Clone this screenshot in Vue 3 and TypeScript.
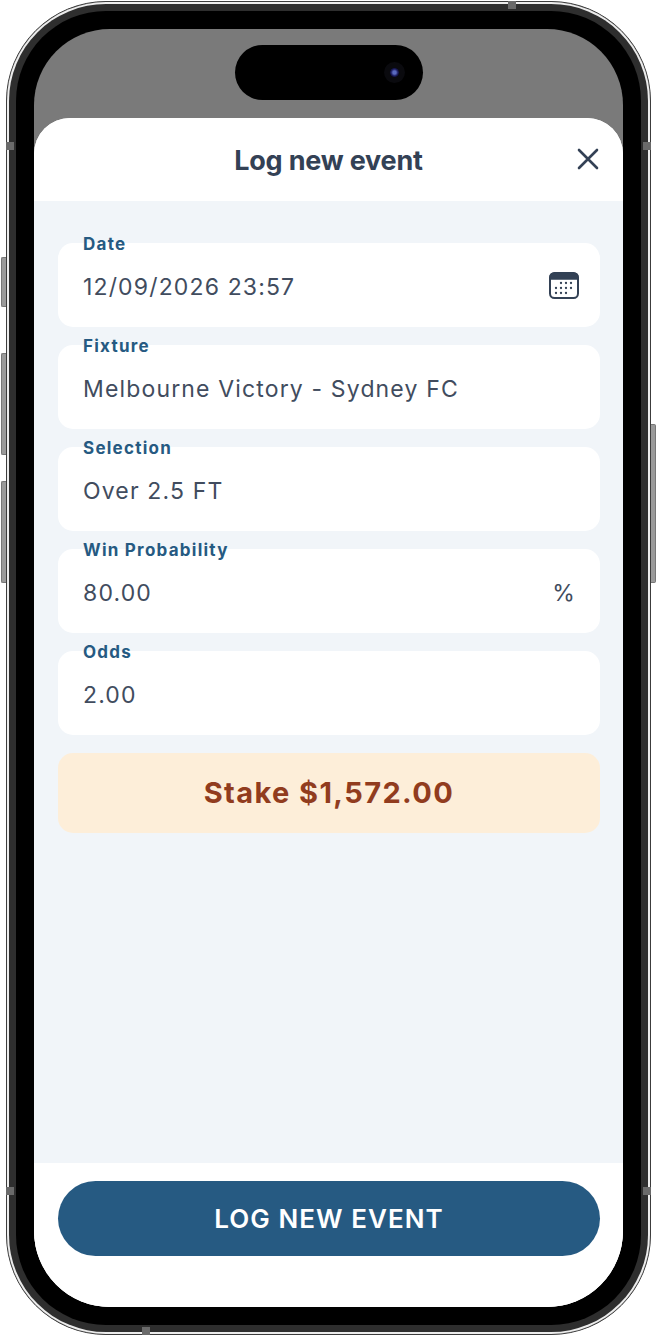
<script setup lang="ts">
interface Field { label: string; value: string; suffix?: string; calendar?: boolean }
const fields: Field[] = [
  { label: 'Date', value: '12/09/2026 23:57', calendar: true },
  { label: 'Fixture', value: 'Melbourne Victory - Sydney FC' },
  { label: 'Selection', value: 'Over 2.5 FT' },
  { label: 'Win Probability', value: '80.00', suffix: '%' },
  { label: 'Odds', value: '2.00' },
]
const dots: [number, number][] = [
  [12, 12], [17, 12], [22, 12],
  [7, 17], [12, 17], [17, 17], [22, 17],
  [7, 22], [12, 22], [17, 22],
]
</script>

<template>
  <div class="page">
    <div class="phone">
      <span class="side vol-a"></span>
      <span class="side vol-b"></span>
      <span class="side vol-c"></span>
      <span class="side power"></span>
      <span class="band band-lt"></span>
      <span class="band band-lb"></span>
      <span class="band band-rt"></span>
      <span class="band band-rb"></span>
      <span class="band-h band-tr"></span>
      <span class="band-h band-bl"></span>
      <div class="ring-silver">
        <div class="ring-dark">
          <div class="screen">
            <span class="speaker"></span>
            <div class="scrim">
              <div class="island"><span class="camera"></span></div>
            </div>
            <div class="sheet">
              <header class="head">
                <h1 class="title">Log new event</h1>
                <button class="close" aria-label="Close">
                  <svg width="22" height="22" viewBox="0 0 22 22" fill="none" stroke="#334155" stroke-width="2.6" stroke-linecap="round">
                    <path d="M2 2 20 20M20 2 2 20" />
                  </svg>
                </button>
              </header>
              <main class="body">
                <div v-for="f in fields" :key="f.label" class="field">
                  <span class="label">{{ f.label }}</span>
                  <span class="value">{{ f.value }}</span>
                  <span v-if="f.suffix" class="suffix">{{ f.suffix }}</span>
                  <svg v-if="f.calendar" class="cal" width="30" height="28" viewBox="0 0 30 28">
                    <rect x="1" y="2" width="28" height="25" rx="4.5" fill="#fff" stroke="#334155" stroke-width="2" />
                    <path d="M1 8V6.5A4.5 4.5 0 0 1 5.5 2h19A4.5 4.5 0 0 1 29 6.5V8z" fill="#334155" stroke="#334155" stroke-width="1.4" />
                    <circle v-for="d in dots" :key="d.join()" :cx="d[0]" :cy="d[1]" r="1.15" fill="#334155" />
                  </svg>
                </div>
                <div class="stake">Stake $1,572.00</div>
              </main>
              <footer class="foot">
                <button class="cta">LOG NEW EVENT</button>
              </footer>
            </div>
          </div>
        </div>
      </div>
    </div>
  </div>
</template>

<style>
html, body { margin: 0; background: #fff; }
</style>

<style scoped>
.page {
  width: 656px;
  height: 1336px;
  padding: 1px 5px 1px 6px;
  box-sizing: border-box;
  background: #fff;
  font-family: Inter, "Liberation Sans", sans-serif;
}
.phone {
  position: relative;
  width: 645px;
  height: 1334px;
  box-sizing: border-box;
  border-radius: 100px;
  border: 1px solid #3c3c3c;
  background: #3c3c3c;
}
.side {
  position: absolute;
  width: 5px;
  background: #9a9a9a;
  border: 1px solid #777;
  border-right: 0;
  box-sizing: border-box;
}
.vol-a { left: -6px; top: 255px; height: 50px; border-radius: 2px 0 0 2px; }
.vol-b { left: -6px; top: 351px; height: 102px; border-radius: 2px 0 0 2px; }
.vol-c { left: -6px; top: 479px; height: 102px; border-radius: 2px 0 0 2px; }
.power { right: -6px; top: 422px; height: 159px; border-radius: 0 2px 2px 0; border-right: 1px solid #777; border-left: 0; }
.band, .band-h {
  position: absolute;
  z-index: 2;
  background: #6a6a6a;
}
.band { width: 8px; height: 8px; }
.band-lt { left: -1px; top: 140px; }
.band-lb { left: -1px; top: 1185px; }
.band-rt { right: -1px; top: 140px; }
.band-rb { right: -1px; top: 1185px; }
.band-h { width: 8px; height: 8px; }
.band-tr { left: 501px; top: -1px; }
.band-bl { left: 135px; bottom: -1px; }
.ring-silver {
  height: 100%;
  box-sizing: border-box;
  padding: 2px;
  border-radius: 99px;
  background: #ececec;
}
.ring-dark {
  height: 100%;
  box-sizing: border-box;
  padding: 7px;
  border-radius: 97px;
  background: #2e2e2e;
}
.screen {
  position: relative;
  height: 100%;
  box-sizing: border-box;
  padding: 18px;
  display: flex;
  flex-direction: column;
  border-radius: 90px;
  background: #000;
  overflow: hidden;
}
.speaker {
  position: absolute;
  left: 249px;
  top: 0;
  width: 128px;
  height: 3px;
  border-radius: 0 0 3px 3px;
  background: #000;
}
.scrim {
  position: absolute;
  left: 18px;
  right: 18px;
  top: 18px;
  bottom: 18px;
  border-radius: 76px;
  background: #7a7a7a;
  overflow: hidden;
}
.island {
  position: relative;
  width: 188px;
  height: 55px;
  margin: 16px 0 0 201px;
  border-radius: 28px;
  background: #000;
}
.camera {
  position: absolute;
  left: 155px;
  top: 23px;
  width: 9px;
  height: 9px;
  border-radius: 50%;
  background: radial-gradient(circle, #5a6ac0 0 25%, #1a1a5a 55%, #0b0b1f 100%);
  box-shadow: 0 0 0 6px #0a0a0e;
}
.sheet {
  position: relative;
  margin-top: 89px;
  flex: 1;
  display: flex;
  flex-direction: column;
  min-height: 0;
  background: #fff;
  border-radius: 36px 36px 76px 76px;
  overflow: hidden;
}
.head {
  position: relative;
  height: 83px;
  flex: none;
  display: flex;
  align-items: center;
  justify-content: center;
  background: #fff;
}
.title {
  margin: 2px 0 0;
  font-size: 27px;
  font-weight: 700;
  letter-spacing: -0.2px;
  color: #334155;
}
.close {
  position: absolute;
  right: 24px;
  top: 30px;
  width: 22px;
  height: 22px;
  padding: 0;
  border: 0;
  background: none;
  display: flex;
}
.body {
  flex: 1;
  min-height: 0;
  box-sizing: border-box;
  padding: 42px 23px 0 24px;
  display: flex;
  flex-direction: column;
  gap: 18px;
  background: #f1f5f9;
}
.field {
  position: relative;
  height: 84px;
  flex: none;
  box-sizing: border-box;
  padding: 4px 25px 0;
  display: flex;
  align-items: center;
  justify-content: space-between;
  border-radius: 15px;
  background: #fff;
}
.label {
  position: absolute;
  left: 25px;
  top: -9px;
  font-size: 17px;
  line-height: 20px;
  font-weight: 700;
  letter-spacing: 1.25px;
  color: #265a82;
}
.value, .suffix {
  font-size: 23px;
  line-height: 30px;
  letter-spacing: 1.15px;
  color: #414c5e;
}
.suffix { margin-right: -1px; }
.cal { margin: -4px -4px 0 0; }
.stake {
  height: 80px;
  padding-bottom: 2px;
  box-sizing: border-box;
  flex: none;
  display: flex;
  align-items: center;
  justify-content: center;
  border-radius: 15px;
  background: #fdeed9;
  color: #913c1e;
  font-size: 29px;
  font-weight: 700;
  letter-spacing: 1.4px;
}
.foot {
  height: 144px;
  flex: none;
  box-sizing: border-box;
  padding: 18px 23px 0 24px;
  background: #fff;
}
.cta {
  width: 100%;
  height: 75px;
  border: 0;
  border-radius: 38px;
  background: #265a82;
  color: #fff;
  font-family: inherit;
  font-size: 26px;
  font-weight: 600;
  letter-spacing: 1.05px;
}
</style>
